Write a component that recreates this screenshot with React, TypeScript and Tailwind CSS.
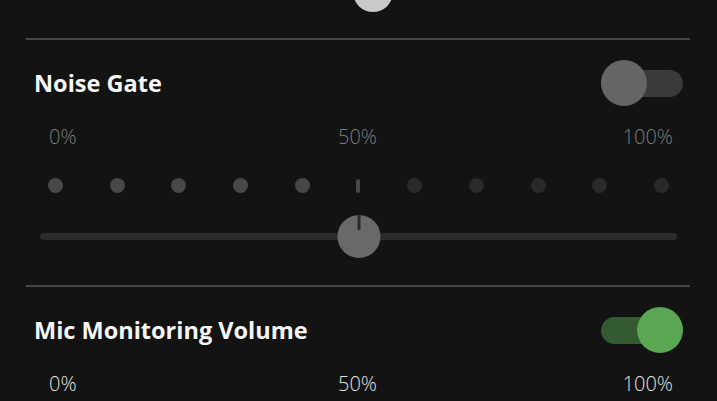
import React from "react";

type ToggleProps = { on: boolean };

const Toggle = ({ on }: ToggleProps) => {
  return (
    <div className="relative w-[82px] h-[46px] flex items-center shrink-0">
      <div
        className={`w-full h-[27px] rounded-full ${
          on ? "bg-[#335a31]" : "bg-[#3a3a3b]"
        }`}
      />
      <div
        className={`absolute top-0 w-[46px] h-[46px] rounded-full ${
          on ? "right-0 bg-[#5aa653]" : "left-0 bg-[#666667]"
        }`}
      />
    </div>
  );
};

const PercentLabels = ({ enabled }: { enabled: boolean }) => {
  return (
    <div
      className={`ml-[14px] mr-[13px] flex text-[20px] leading-[26px] font-light ${
        enabled ? "text-[#e2e2e2]" : "text-[#7c7c7c]"
      }`}
    >
      <div className="flex-1 pl-[9px]">0%</div>
      <div className="mr-[7px]">50%</div>
      <div className="flex-1 text-right pr-[4px]">100%</div>
    </div>
  );
};

const Divider = () => <div className="h-[2px] bg-[#474747]" />;

export default function App() {
  const dots = Array.from({ length: 11 }, (_, i) => i);

  return (
    <div
      className="w-[717px] h-[401px] overflow-hidden bg-[#131313] text-[#f5f5f5]"
      style={{ fontFamily: '"Open Sans", "Noto Sans", sans-serif' }}
    >
      {/* bottom edge of the slider above */}
      <div className="relative h-[12px] overflow-hidden">
        <div className="absolute left-[353px] -top-[28px] w-[40px] h-[40px] rounded-full bg-[#c9c9cb]" />
      </div>

      <div className="ml-[26px] mr-[27px]">
        <div className="mt-[26px]">
          <Divider />
        </div>

        {/* Noise Gate */}
        <div className="pt-[20px] flex items-center justify-between pl-[8px] pr-[7px]">
          <div className="text-[23.5px] font-bold leading-[30px]">Noise Gate</div>
          <Toggle on={false} />
        </div>

        <div className="mt-[18px]">
          <PercentLabels enabled={false} />
        </div>

        <div className="mt-[28px] ml-[22px] mr-[21px] flex items-center justify-between h-[15px]">
          {dots.map((i) =>
            i === 5 ? (
              <div key={i} className="w-[4px] h-[14px] rounded-full bg-[#484848]" />
            ) : (
              <div
                key={i}
                className={`w-[15px] h-[15px] rounded-full ${
                  i < 5 ? "bg-[#484848]" : "bg-[#2a2a2a]"
                }`}
              />
            )
          )}
        </div>

        <div className="mt-[22px] ml-[14px] mr-[13px] relative h-[43px] flex items-center">
          <div className="w-full h-[7px] rounded-full bg-[#2b2b2b]" />
          <div className="absolute left-1/2 top-0 -translate-x-1/2 w-[43px] h-[43px] rounded-full bg-[#69696b] flex justify-center">
            <div className="w-[3px] h-[15px] bg-[#2a2a2a]" />
          </div>
        </div>

        <div className="mt-[27px]">
          <Divider />
        </div>

        {/* Mic Monitoring Volume */}
        <div className="pt-[20px] flex items-center justify-between pl-[8px] pr-[7px]">
          <div className="text-[23.5px] font-bold leading-[30px]">
            Mic Monitoring Volume
          </div>
          <Toggle on={true} />
        </div>

        <div className="mt-[18px]">
          <PercentLabels enabled={true} />
        </div>
      </div>
    </div>
  );
}
